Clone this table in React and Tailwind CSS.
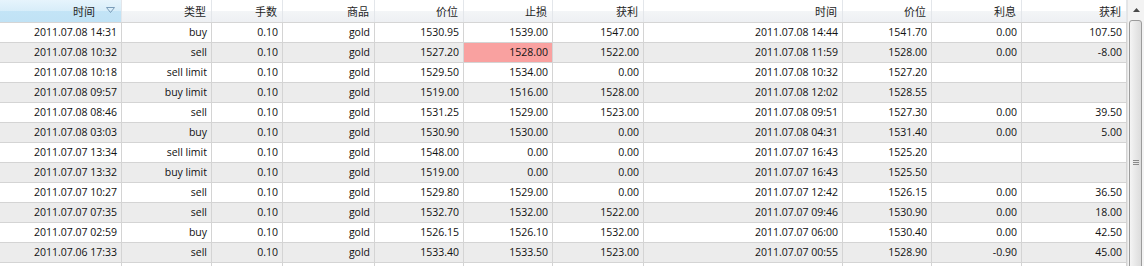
import React from "react";

const cols = [
  { key: "t1", label: "时间", w: "w-[122px]" },
  { key: "type", label: "类型", w: "w-[90px]" },
  { key: "lots", label: "手数", w: "w-[71px]" },
  { key: "sym", label: "商品", w: "w-[92px]" },
  { key: "p1", label: "价位", w: "w-[89px]" },
  { key: "sl", label: "止损", w: "w-[89px]" },
  { key: "tp", label: "获利", w: "w-[91px]" },
  { key: "t2", label: "时间", w: "w-[199px]" },
  { key: "p2", label: "价位", w: "w-[89px]" },
  { key: "swap", label: "利息", w: "w-[90px]" },
  { key: "profit", label: "获利", w: "w-[105px]" },
];

const rows = [
  ["2011.07.08 14:31", "buy", "0.10", "gold", "1530.95", "1539.00", "1547.00", "2011.07.08 14:44", "1541.70", "0.00", "107.50"],
  ["2011.07.08 10:32", "sell", "0.10", "gold", "1527.20", "1528.00", "1522.00", "2011.07.08 11:59", "1528.00", "0.00", "-8.00"],
  ["2011.07.08 10:18", "sell limit", "0.10", "gold", "1529.50", "1534.00", "0.00", "2011.07.08 10:32", "1527.20", "", ""],
  ["2011.07.08 09:57", "buy limit", "0.10", "gold", "1519.00", "1516.00", "1528.00", "2011.07.08 12:02", "1528.55", "", ""],
  ["2011.07.08 08:46", "sell", "0.10", "gold", "1531.25", "1529.00", "1523.00", "2011.07.08 09:51", "1527.30", "0.00", "39.50"],
  ["2011.07.08 03:03", "buy", "0.10", "gold", "1530.90", "1530.00", "0.00", "2011.07.08 04:31", "1531.40", "0.00", "5.00"],
  ["2011.07.07 13:34", "sell limit", "0.10", "gold", "1548.00", "0.00", "0.00", "2011.07.07 16:43", "1525.20", "", ""],
  ["2011.07.07 13:32", "buy limit", "0.10", "gold", "1519.00", "0.00", "0.00", "2011.07.07 16:43", "1525.50", "", ""],
  ["2011.07.07 10:27", "sell", "0.10", "gold", "1529.80", "1529.00", "0.00", "2011.07.07 12:42", "1526.15", "0.00", "36.50"],
  ["2011.07.07 07:35", "sell", "0.10", "gold", "1532.70", "1532.00", "1522.00", "2011.07.07 09:46", "1530.90", "0.00", "18.00"],
  ["2011.07.07 02:59", "buy", "0.10", "gold", "1526.15", "1526.10", "1532.00", "2011.07.07 06:00", "1530.40", "0.00", "42.50"],
  ["2011.07.06 17:33", "sell", "0.10", "gold", "1533.40", "1533.50", "1523.00", "2011.07.07 00:55", "1528.90", "-0.90", "45.00"],
];

function HeaderRow() {
  return (
    <div className="flex shrink-0 h-[23px] border-b border-[#d5d5d5]">
      {cols.map((c, i) => (
        <div
          key={c.key}
          className={`${c.w} shrink-0 h-full flex items-center justify-end border-r border-[#e3e6ea] pr-[5px] ${
            i === 0
              ? "bg-[linear-gradient(#e6f4fc_0%,#d7edf9_50%,#c3e4f6_51%,#c0e2f5_100%)]"
              : "bg-[linear-gradient(#ffffff_0%,#ffffff_50%,#f3f5f7_51%,#eef0f3_100%)]"
          }`}
        >
          <span className="text-[11px] leading-none text-[#1e1e1e]">{c.label}</span>
          {i === 0 && (
            <svg width="9" height="6" viewBox="0 0 9 6" className="ml-[11px] mr-[1px] mb-[2px]">
              <path d="M0.5 0.5 H8.5 L4.5 5.5 Z" fill="none" stroke="#7a9cb8" strokeWidth="1" />
            </svg>
          )}
        </div>
      ))}
    </div>
  );
}

function DataRow({ r, idx }) {
  const bg = idx % 2 === 0 ? "bg-white" : "bg-[#ececec]";
  return (
    <div className={`flex shrink-0 h-[20px] border-b border-[#d4d4d4] ${bg}`}>
      {cols.map((c, i) => {
        const red = idx === 1 && i === 5;
        return (
          <div
            key={c.key}
            className={`${c.w} shrink-0 h-full border-r border-[#d4d4d4] pr-[4px] text-right leading-[19px] whitespace-nowrap ${
              red ? "bg-[#f9a1a0]" : ""
            }`}
          >
            {r[i]}
          </div>
        );
      })}
    </div>
  );
}

function Scrollbar() {
  return (
    <div className="w-[17px] h-full flex flex-col bg-[#f3f3f3] border-l border-[#e4e4e4]">
      <div className="h-[20px] flex items-center justify-center shrink-0">
        <svg width="7" height="4" viewBox="0 0 7 4">
          <path d="M0 4 L3.5 0 L7 4 Z" fill="#4a4a4a" />
        </svg>
      </div>
      <div className="flex-1 ml-[1px] mr-[2px] mb-[-6px] rounded-[3px] border border-[#9b9b9b] bg-[linear-gradient(90deg,#f5f5f5,#e9e9e9_45%,#dcdcdc)] flex items-center justify-center">
        <div className="flex flex-col gap-[1px] mt-[32px]">
          <div className="w-[6px] h-[1px] bg-[#8a8a8a]" />
          <div className="w-[6px] h-[1px] bg-[#8a8a8a]" />
          <div className="w-[6px] h-[1px] bg-[#8a8a8a]" />
        </div>
      </div>
    </div>
  );
}

export default function App() {
  return (
    <div
      className="w-[1144px] h-[266px] overflow-hidden flex bg-white text-[#111] text-[10.5px]"
      style={{ fontFamily: '"Open Sans", "Noto Sans CJK SC", sans-serif' }}
    >
      <div className="w-[1127px] h-full flex flex-col overflow-hidden">
        <HeaderRow />
        {rows.map((r, idx) => (
          <DataRow key={idx} r={r} idx={idx} />
        ))}
        <DataRow r={Array(11).fill("")} idx={12} />
      </div>
      <Scrollbar />
    </div>
  );
}
